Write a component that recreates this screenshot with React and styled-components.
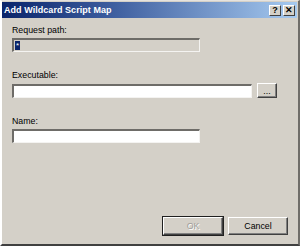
import React from 'react'
import styled, { createGlobalStyle } from 'styled-components'

const Global = createGlobalStyle`
  html, body {
    margin: 0;
    padding: 0;
    background: #d4d0c8;
  }
  body {
    font-family: "Liberation Sans", Arial, sans-serif;
  }
`

const Window = styled.div`
  box-sizing: border-box;
  width: 300px;
  height: 246px;
  background: #d4d0c8;
  border-top: 1px solid #e6e3de;
  border-left: 2px solid #ffffff;
  border-right: 2px solid #6f6d69;
  border-bottom: 2px solid #404040;
  display: flex;
  flex-direction: column;
  padding: 1px 1px 0 0;
`

const TitleBar = styled.div`
  height: 16px;
  display: flex;
  align-items: center;
  justify-content: space-between;
  padding: 0 2px 0 2px;
  background: linear-gradient(to right, #0a246a 0%, #3a5a9c 35%, #a6caf0 100%);
`

const Title = styled.span`
  color: #fff;
  font-weight: bold;
  font-size: 9px;
  letter-spacing: 0.05px;
`

const TitleButtons = styled.div`
  display: flex;
  gap: 2px;
`

const CaptionButton = styled.div`
  box-sizing: border-box;
  width: 12px;
  height: 11px;
  background: #d4d0c8;
  border-top: 1px solid #fff;
  border-left: 1px solid #fff;
  border-right: 1px solid #404040;
  border-bottom: 1px solid #404040;
  display: flex;
  align-items: center;
  justify-content: center;
  font-size: 9px;
  font-weight: bold;
  color: #000;
  line-height: 1;
`

const Body = styled.div`
  flex: 1;
  display: flex;
  flex-direction: column;
  padding: 7px 0 0 10px;
`

const Label = styled.div`
  font-size: 8.8px;
  color: #000;
  height: 10px;
  line-height: 10px;
  margin-bottom: 3px;
`

const Row = styled.div`
  display: flex;
  align-items: center;
  gap: 5px;
  margin-bottom: ${p => p.$gap}px;
`

const Field = styled.div`
  box-sizing: border-box;
  width: ${p => p.$w}px;
  height: 14px;
  background: ${p => (p.$disabled ? '#d4d0c8' : '#fff')};
  border-top: 2px solid #6e6c68;
  border-left: 2px solid #6e6c68;
  border-right: 1px solid #f4f3f1;
  border-bottom: 1px solid #f4f3f1;
  display: flex;
  align-items: center;
  padding-left: 1px;
`

const Selected = styled.span`
  background: #0a246a;
  color: #fff;
  font-size: 8px;
  line-height: 9px;
  height: 9px;
  padding: 0 1px;
`

const Button = styled.div`
  box-sizing: border-box;
  width: ${p => p.$w}px;
  height: ${p => p.$h}px;
  background: #d4d0c8;
  border-top: 1px solid #fff;
  border-left: 1px solid #fff;
  border-right: 1px solid #404040;
  border-bottom: 1px solid #404040;
  box-shadow: inset -1px -1px 0 #808080${p => (p.$default ? ', 0 0 0 1px #202020' : '')};
  display: flex;
  align-items: center;
  justify-content: center;
  font-size: 8.8px;
  color: ${p => (p.$disabled ? '#a09e9a' : '#000')};
  text-shadow: ${p => (p.$disabled ? '1px 1px 0 #fff' : 'none')};
`

const Footer = styled.div`
  margin-top: auto;
  display: flex;
  justify-content: flex-end;
  gap: 5px;
  padding: 0 9px 9px 0;
`

export default function App() {
  return (
    <>
      <Global />
      <Window>
        <TitleBar>
          <Title>Add Wildcard Script Map</Title>
          <TitleButtons>
            <CaptionButton>?</CaptionButton>
            <CaptionButton>✕</CaptionButton>
          </TitleButtons>
        </TitleBar>
        <Body>
          <Label>Request path:</Label>
          <Row $gap={18}>
            <Field $w={188} $disabled>
              <Selected>*</Selected>
            </Field>
          </Row>
          <Label>Executable:</Label>
          <Row $gap={18}>
            <Field $w={240} />
            <Button $w={20} $h={15}>...</Button>
          </Row>
          <Label>Name:</Label>
          <Row $gap={0}>
            <Field $w={188} />
          </Row>
        </Body>
        <Footer>
          <Button $w={60} $h={18} $default $disabled>OK</Button>
          <Button $w={60} $h={18}>Cancel</Button>
        </Footer>
      </Window>
    </>
  )
}
